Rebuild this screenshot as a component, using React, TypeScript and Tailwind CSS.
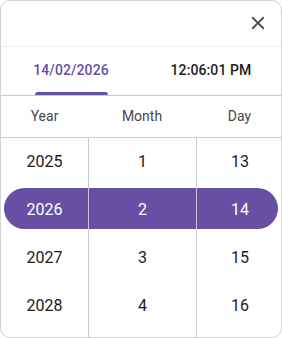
import React from "react";

const years = ["2025", "2026", "2027", "2028"];
const months = ["1", "2", "3", "4"];
const days = ["13", "14", "15", "16"];

function Col({ items, border }: { items: string[]; border?: boolean }) {
  return (
    <div className={`flex flex-col ${border ? "border-l border-[#c9c7cf]" : ""}`}>
      {items.map((v, i) => (
        <div
          key={v}
          className={`h-12 flex items-center justify-center text-[16px] ${i === 1 ? "text-white" : "text-[#1d1b20]"}`}
        >
          {v}
        </div>
      ))}
    </div>
  );
}

export default function App() {
  return (
    <div
      className="w-[282px] h-[338px] bg-white border border-[#d4d4d4] rounded-[10px] overflow-hidden flex flex-col"
      style={{ fontFamily: "Roboto, 'Liberation Sans', sans-serif" }}
    >
      <div className="h-[46px] flex items-center justify-end pr-[12px] border-b border-[#ededed] shrink-0">
        <svg width="22" height="22" viewBox="0 0 24 24" className="mt-[-1px]">
          <path
            fill="#49454f"
            d="M19 6.41L17.59 5 12 10.59 6.41 5 5 6.41 10.59 12 5 17.59 6.41 19 12 13.41 17.59 19 19 17.59 13.41 12z"
          />
        </svg>
      </div>
      <div className="h-[49px] grid grid-cols-2 border-b border-[#c9c7cf] shrink-0">
        <div className="flex flex-col items-center">
          <div className="flex-1 flex items-center pt-[2px]">
            <span className="text-[14px] font-medium text-[#6750a4] tracking-[0.1px]">14/02/2026</span>
          </div>
          <div className="w-[73px] h-[3px] bg-[#6750a4] rounded-t-[3px]" />
        </div>
        <div className="flex flex-col items-center">
          <div className="flex-1 flex items-center pt-[2px]">
            <span className="text-[14px] font-medium text-[#1d1b20] tracking-[0.1px]">12:06:01 PM</span>
          </div>
          <div className="h-[3px]" />
        </div>
      </div>
      <div className="h-[42px] grid grid-cols-[87px_108px_87px] border-b border-[#c9c7cf] shrink-0 text-[14px] text-[#49454f]">
        <div className="flex items-center justify-center">Year</div>
        <div className="flex items-center justify-center">Month</div>
        <div className="flex items-center justify-center">Day</div>
      </div>
      <div className="relative flex-1">
        <div className="absolute left-[3px] right-[3px] top-[50px] h-[41px] rounded-full bg-[#6750a4]" />
        <div className="relative grid grid-cols-[87px_108px_87px] h-full">
          <Col items={years} />
          <Col items={months} border />
          <Col items={days} border />
        </div>
      </div>
    </div>
  );
}
